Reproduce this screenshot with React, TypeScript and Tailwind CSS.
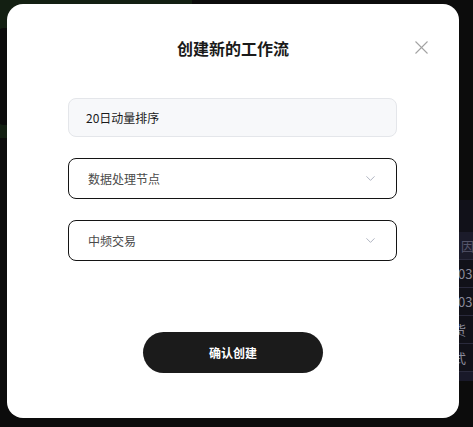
import { ChevronDown } from "lucide-react";

const font = { fontFamily: '"Noto Sans CJK SC", "Noto Sans", sans-serif' };

const bgRows = [
  { text: "因", pad: "pl-[25px]", head: true },
  { text: "03", pad: "pl-[22px]" },
  { text: "03", pad: "pl-[22px]" },
  { text: "货", pad: "pl-[17px]" },
  { text: "式", pad: "pl-[17px]" },
];

function Backdrop() {
  return (
    <div className="absolute inset-0 bg-[#0c0c0c]">
      {/* green card on the left */}
      <div className="w-[192px] h-[138px] bg-[#131f12] pt-[28px]">
        <div className="-ml-[4px] w-[40px] h-[97px] rounded-lg bg-[#0b0b0b]" />
      </div>

      {/* table peeking out on the right */}
      <div className="absolute left-[436px] top-[200px] w-[60px] flex flex-col bg-[#111119]">
        <div className="h-[32px]" />
        {bgRows.map((r, i) => (
          <div
            key={i}
            className={
              r.head
                ? `h-[27px] flex items-center ${r.pad} bg-[#1b1b2a] text-[13px] text-[#55556a]`
                : `h-[28px] flex items-center ${r.pad} border-t border-[#2a2a3c] text-[13px] text-[#8a8a9a]`
            }
          >
            {r.text}
          </div>
        ))}
        <div className="h-[10px] bg-[#191929] border-t border-[#2a2a3c]" />
      </div>
    </div>
  );
}

function Select({ value }: { value: string }) {
  return (
    <div className="h-[41px] flex items-center justify-between pl-[19px] pr-[18px] border border-[#141414] rounded-[8px] bg-white">
      <span className="text-[12px] text-[#4a4a4a]">{value}</span>
      <ChevronDown className="w-[15px] h-[15px] text-[#9ea3b3]" strokeWidth={1.3} />
    </div>
  );
}

export default function App() {
  return (
    <div className="relative w-full h-[427px] overflow-hidden" style={font}>
      <Backdrop />

      <div className="absolute inset-0 pl-[7px] pt-[4px]">
        <div className="relative w-[452px] h-[414px] rounded-[16px] bg-white pt-[32px]">
          <button className="absolute right-[31px] top-[37px] w-[13px] h-[13px]">
            <svg viewBox="0 0 13 13" className="w-full h-full" stroke="#a3a3a3" strokeWidth="1.1">
              <line x1="0.5" y1="0.5" x2="12.5" y2="12.5" />
              <line x1="12.5" y1="0.5" x2="0.5" y2="12.5" />
            </svg>
          </button>

          <h2 className="h-6 leading-6 text-center text-[16px] font-bold text-[#1a1a1a]">创建新的工作流</h2>

          <div className="w-[329px] ml-[61px] mt-[38px] flex flex-col gap-[21px]">
            <div className="h-[39px] flex items-center pl-[17px] rounded-[8px] bg-[#f7f8fa] border border-[#e4e6ea]">
              <span className="text-[12px] text-[#1a1a1a]">20日动量排序</span>
            </div>
            <Select value="数据处理节点" />
            <Select value="中频交易" />
          </div>

          <div className="flex justify-center mt-[71px]">
            <button className="w-[180px] h-[41px] rounded-full bg-[#1b1b1b] text-white text-[12px] font-bold">
              确认创建
            </button>
          </div>
        </div>
      </div>
    </div>
  );
}
